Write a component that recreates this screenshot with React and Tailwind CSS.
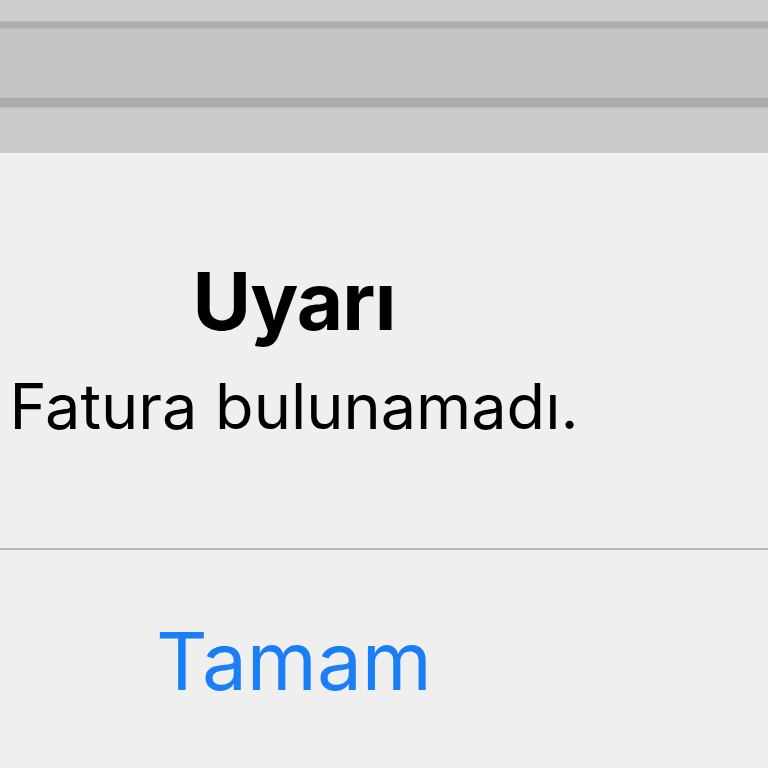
export default function App() {
  return (
    <div className="h-[768px] w-[768px] overflow-hidden bg-[#efefef] font-['Inter','Liberation_Sans',sans-serif]">
      <div className="h-[21px] bg-[#cdcdcd]" />
      <div className="h-[8px] border-y border-[#bdbdbd] bg-[#acacac]" />
      <div className="h-[68px] bg-[#c4c4c4]" />
      <div className="h-[11px] border-y border-[#bdbdbd] bg-[#acacac]" />
      <div className="h-[45px] bg-[#cbcbcb]" />

      <div className="w-[588px]">
        <h1 className="mt-[108px] text-center text-[80px] font-bold leading-none tracking-[-0.01em] text-black">Uyarı</h1>
        <p className="mt-[34px] whitespace-nowrap text-center text-[63px] leading-none text-black">
          Fatura bulunamadı.
        </p>
      </div>

      <div className="mt-[110px] h-[2px] bg-[#b9b9b9]" />

      <div className="w-[588px]">
        <button className="mt-[71px] w-full text-center text-[80px] leading-none text-[#1a7ff7]">Tamam</button>
      </div>
    </div>
  );
}
